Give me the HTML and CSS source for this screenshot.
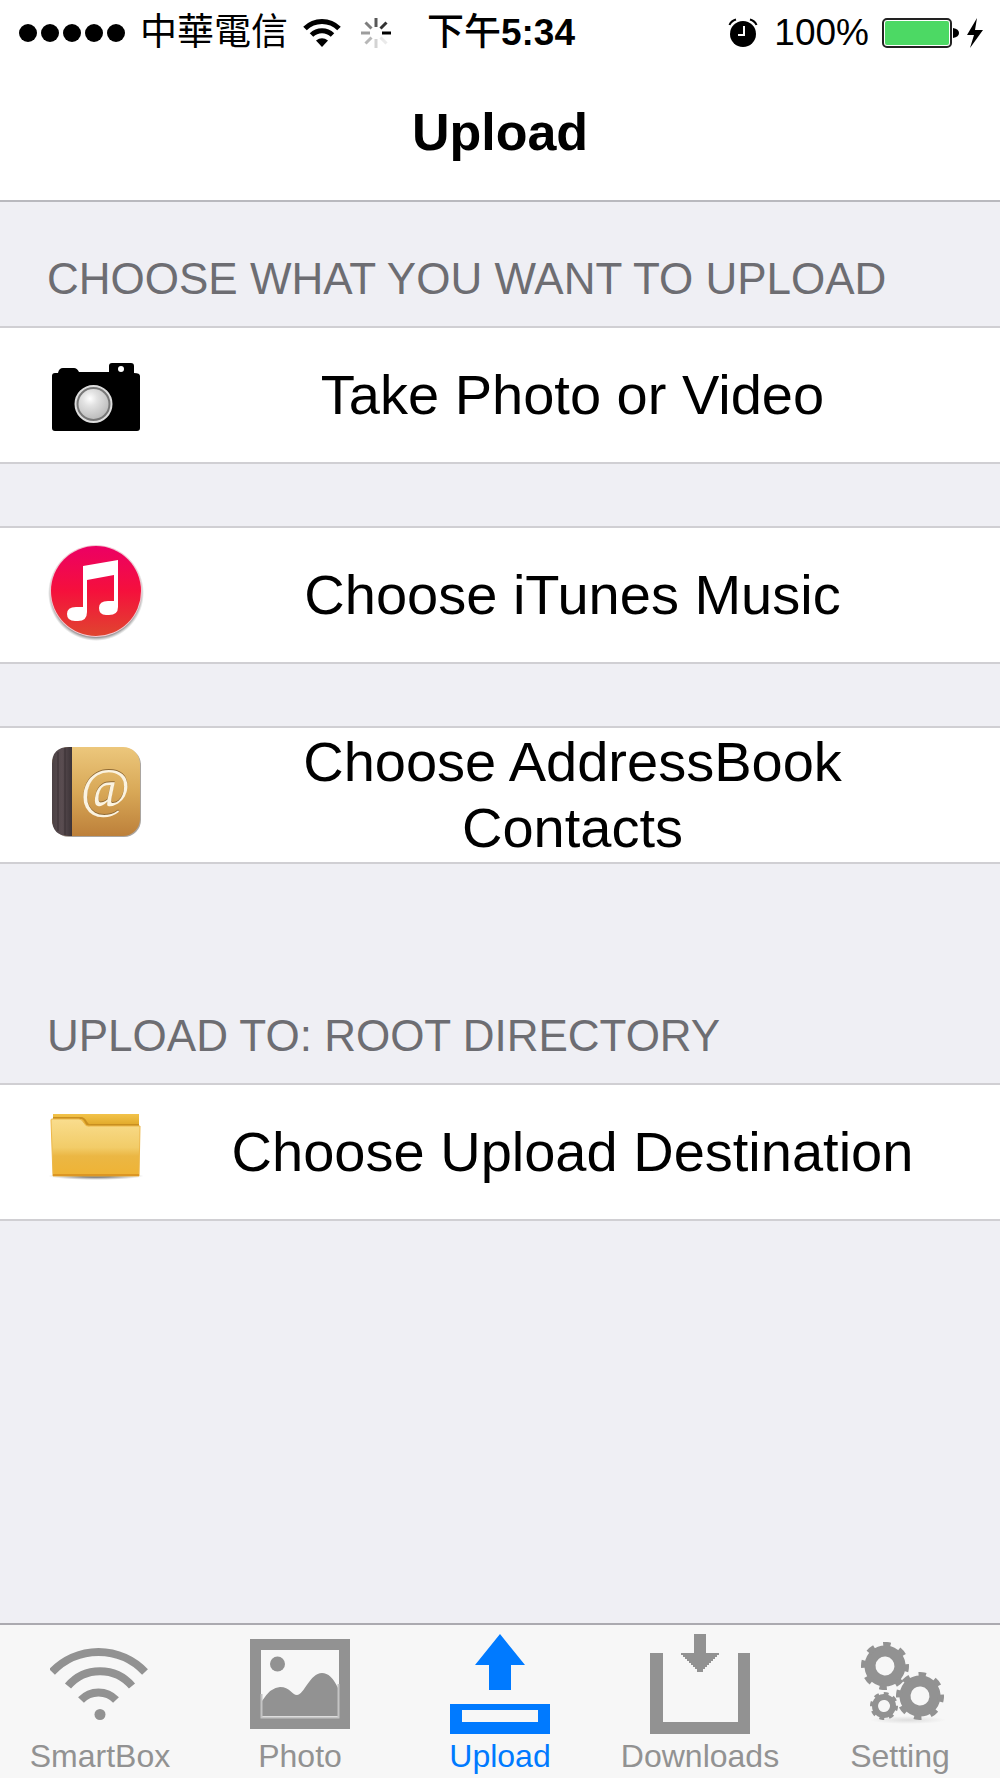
FILE: index.html
```html
<!DOCTYPE html>
<html lang="en">
<head>
<meta charset="utf-8">
<meta name="viewport" content="width=device-width, initial-scale=1">
<title>Upload</title>
<link rel="stylesheet" href="styles.css">
</head>
<body>
<div class="screen">
  <header class="top">
    <div class="status">
      <div class="status-left">
        <svg width="106" height="18" viewBox="0 0 106 18" aria-hidden="true">
          <circle cx="9" cy="9" r="9"/><circle cx="31" cy="9" r="9"/><circle cx="53" cy="9" r="9"/><circle cx="75" cy="9" r="9"/><circle cx="97" cy="9" r="9"/>
        </svg>
        <span class="carrier">中華電信</span>
        <svg width="38" height="30" viewBox="0 0 38 30" fill="none" stroke="#000" stroke-width="5" aria-hidden="true">
          <path d="M2 10.500A24 24 0 0 1 36 10.500"/>
          <path d="M8.500 17A15 15 0 0 1 29.500 17"/>
          <path d="M13 22.500Q19 18 25 22.500L19 29Z" fill="#000" stroke="none"/>
        </svg>
        <svg class="spinner" width="32" height="32" viewBox="-16 -16 32 32" stroke="#000" stroke-width="3" aria-hidden="true">
          <path d="M0-6V-15" opacity=".65"/>
          <path d="M4.500-4.500L10.500-10.500" opacity=".8"/>
          <path d="M6 0H15"/>
          <path d="M4.500 4.500L10.500 10.500" opacity=".08"/>
          <path d="M0 6V15" opacity=".17"/>
          <path d="M-4.500 4.500L-10.500 10.500" opacity=".28"/>
          <path d="M-6 0H-15" opacity=".38"/>
          <path d="M-4.500-4.500L-10.500-10.500" opacity=".5"/>
        </svg>
      </div>
      <time class="time"><span class="meridiem">下午</span>5:34</time>
      <div class="status-right">
        <svg width="30" height="30" viewBox="0 0 30 30" aria-hidden="true">
          <circle cx="15" cy="16" r="13"/>
          <path d="M1.500 7Q3 3 8 1.500M28.500 7Q27 3 22 1.500" fill="none" stroke="#000" stroke-width="2"/>
          <path d="M16 8V17H10" fill="none" stroke="#fff" stroke-width="2"/>
        </svg>
        <span class="percent">100%</span>
        <svg width="102" height="32" viewBox="0 0 102 32" aria-hidden="true">
          <rect x="2" y="2" width="68" height="28" rx="4" fill="#fff" stroke="#222" stroke-width="2"/>
          <rect x="4" y="4" width="64" height="24" rx="2" fill="#4cd964"/>
          <path d="M72 11Q78 12 78 16T72 21Z"/>
          <path d="M96 1L86 18H93L89 31L102 13H94Z"/>
        </svg>
      </div>
    </div>
    <h1 class="title">Upload</h1>
  </header>

  <main class="content">
    <section>
      <h2 class="caption">CHOOSE WHAT YOU WANT TO UPLOAD</h2>
      <div class="rows">
        <button class="row" type="button">
          <svg class="row-icon" viewBox="0 0 96 104" aria-hidden="true">
            <defs>
              <radialGradient id="lens" cx=".38" cy=".32" r=".7"><stop offset="0" stop-color="#fff"/><stop offset=".35" stop-color="#e2e2e2"/><stop offset="1" stop-color="#bcbcbc"/></radialGradient>
            </defs>
            <path d="M7 30Q4 30 4 33V85Q4 88 7 88H89Q92 88 92 85V33Q92 30 86 30V23Q86 20 83 20H64Q61 20 61 23V29H31Q29 25 26 25H15Q11 25 10 30Z"/>
            <circle cx="73" cy="26" r="3" fill="#fff"/>
            <circle cx="45.500" cy="61" r="18" fill="#777" stroke="#ddd" stroke-width="2"/>
            <circle cx="45.500" cy="61" r="15" fill="url(#lens)"/>
          </svg>
          <span class="row-label">Take Photo or Video</span>
        </button>
        <button class="row" type="button">
          <svg class="row-icon" viewBox="0 0 96 104" aria-hidden="true">
            <defs>
              <linearGradient id="disc" x2="0" y2="1"><stop offset="0" stop-color="#ec0064"/><stop offset=".5" stop-color="#f5103c"/><stop offset="1" stop-color="#e0452f"/></linearGradient>
              <radialGradient id="halo"><stop offset=".9" stop-color="#666"/><stop offset="1" stop-color="#999" stop-opacity="0"/></radialGradient>
            </defs>
            <circle cx="48" cy="50" r="48" fill="url(#halo)"/>
            <circle cx="48" cy="48" r="46" fill="#f2c9d2"/>
            <circle cx="48" cy="48" r="45" fill="url(#disc)"/>
            <path d="M35 23L70 17V64Q70 72 61 72H58Q51 72 51 65T60 58H66V32L39 37V69Q39 78 30 78H27Q19 78 19 71T28 64H35Z" fill="#fff"/>
          </svg>
          <span class="row-label">Choose iTunes Music</span>
        </button>
        <button class="row" type="button">
          <svg class="row-icon" viewBox="0 0 96 104" aria-hidden="true">
            <defs>
              <linearGradient id="cover" x2="0" y2="1"><stop offset="0" stop-color="#ecc77c"/><stop offset=".5" stop-color="#d8a857"/><stop offset="1" stop-color="#bd803a"/></linearGradient>
              <linearGradient id="spine"><stop offset="0" stop-color="#4b4144"/><stop offset=".5" stop-color="#5a4d51"/><stop offset="1" stop-color="#3c3337"/></linearGradient>
            </defs>
            <rect x="4" y="5" width="89" height="89" rx="17" fill="#aaa5a0"/>
            <rect x="4" y="4" width="88" height="89" rx="17" fill="url(#cover)"/>
            <path d="M24 4H21Q4 4 4 21V76Q4 93 21 93H24Z" fill="url(#spine)"/>
            <path d="M10 9V88M17 5V92" stroke="#382f33" fill="none"/>
            <text class="at-shade" x="57" y="62">@</text>
            <text class="at" x="57" y="63">@</text>
          </svg>
          <span class="row-label">Choose AddressBook Contacts</span>
        </button>
      </div>
    </section>

    <section>
      <h2 class="caption caption-second">UPLOAD TO: ROOT DIRECTORY</h2>
      <div class="rows">
        <button class="row" type="button">
          <svg class="row-icon" viewBox="0 0 96 104" aria-hidden="true">
            <defs>
              <linearGradient id="flap" x2="0" y2="1"><stop offset="0" stop-color="#f9dd8e"/><stop offset=".5" stop-color="#f2cc68"/><stop offset=".65" stop-color="#ebb744"/><stop offset="1" stop-color="#efb334"/></linearGradient>
              <linearGradient id="back" x2="0" y2="1"><stop offset="0" stop-color="#f2c34a"/><stop offset="1" stop-color="#d89a18"/></linearGradient>
              <radialGradient id="ground"><stop offset=".3" stop-color="#777"/><stop offset="1" stop-color="#999" stop-opacity="0"/></radialGradient>
            </defs>
            <ellipse cx="48" cy="76" rx="48" ry="4" fill="url(#ground)"/>
            <path d="M5 14H91V31H5Z" fill="url(#back)"/>
            <path d="M5 18H33Q36 18 38 22T43 25H91" fill="none" stroke="#c98f20" stroke-width="2"/>
            <path d="M3 20Q3 19 4 19H31Q34 19 36 23T42 26H92L91 76H5Z" fill="url(#flap)" stroke="#edb84a"/>
            <path d="M5 75H91" stroke="#dc9624" stroke-width="2"/>
          </svg>
          <span class="row-label">Choose Upload Destination</span>
        </button>
      </div>
    </section>
  </main>

  <nav class="tabs">
    <a class="tab" href="#smartbox">
      <svg class="tab-icon" viewBox="0 0 100 100" aria-hidden="true">
        <g fill="none" stroke="currentColor" stroke-width="8">
          <path d="M2 38A64 64 0 0 1 95 38"/><path d="M18 52A42 42 0 0 1 82 52"/><path d="M31 66A24 24 0 0 1 66 66"/>
        </g>
        <circle cx="50" cy="80.500" r="5.500" fill="currentColor"/>
      </svg>
      <span>SmartBox</span>
    </a>
    <a class="tab" href="#photo">
      <svg class="tab-icon" viewBox="0 0 100 100" fill="currentColor" aria-hidden="true">
        <path fill-rule="evenodd" d="M0 5H100V95H0ZM11 16V84H89V16Z"/>
        <path d="M12 67Q21 53 30 53C40 53 42 61 47 61C54 61 60 39 72 39Q81 39 88 54V82H12Z"/>
        <path d="M11.500 60V83.500H88.500V50" fill="none" stroke="#c4c4c4" stroke-width="2"/>
        <circle cx="27.500" cy="30" r="7.500"/>
      </svg>
      <span>Photo</span>
    </a>
    <a class="tab tab-active" href="#upload" aria-current="page">
      <svg class="tab-icon" viewBox="0 0 100 100" fill="currentColor" aria-hidden="true">
        <path d="M50 0L75 31H61V56H39V31H25Z"/>
        <path fill-rule="evenodd" d="M0 70H100V100H0ZM12 76V88H88V76Z"/>
      </svg>
      <span>Upload</span>
    </a>
    <a class="tab" href="#downloads">
      <svg class="tab-icon" viewBox="0 0 100 100" fill="currentColor" aria-hidden="true">
        <path d="M0 19H13V88H88V19H100V100H0Z"/>
        <path d="M44 0H56V19H69V21H67V23H65V25H63V27H61V29H59V31H57V33H55V35H53V38H47V35H45V33H43V31H41V29H39V27H37V25H35V23H33V21H31V19H44Z"/>
      </svg>
      <span>Downloads</span>
    </a>
    <a class="tab" href="#setting">
      <svg class="tab-icon" viewBox="0 0 100 100" aria-hidden="true">
        <defs><radialGradient id="cast"><stop offset="0" stop-color="#ddd"/><stop offset="1" stop-color="#f7f7f7"/></radialGradient></defs>
        <ellipse cx="58" cy="86" rx="38" ry="4" fill="url(#cast)"/>
        <g fill="none" stroke="currentColor">
          <g transform="translate(35 32) rotate(5)"><circle r="15" stroke-width="11"/><circle r="21" stroke-width="6" pathLength="160" stroke-dasharray="9 11" stroke-dashoffset="4.500"/></g>
          <g transform="translate(70 62) rotate(6)"><circle r="15" stroke-width="11"/><circle r="21" stroke-width="6" pathLength="160" stroke-dasharray="9 11" stroke-dashoffset="4.500"/></g>
          <g transform="translate(34 72) rotate(10)"><circle r="9" stroke-width="6"/><circle r="12" stroke-width="4" pathLength="160" stroke-dasharray="10 10" stroke-dashoffset="5"/></g>
        </g>
      </svg>
      <span>Setting</span>
    </a>
  </nav>
</div>
</body>
</html>
```
FILE: styles.css
```css
* {
  box-sizing: border-box;
}

body {
  margin: 0;
  background: #efeff4;
  color: #000;
  font-family: "Liberation Sans", "Noto Sans CJK TC", sans-serif;
}

.screen {
  display: flex;
  flex-direction: column;
  min-height: 100vh;
}

svg {
  display: block;
  flex: none;
}

.top {
  background: #fff;
  border-bottom: 2px solid #b9b9be;
}

.status {
  display: flex;
  align-items: center;
  height: 64px;
  padding: 1px 17px 0 19px;
  font-size: 37px;
  line-height: 48px;
  white-space: nowrap;
}

.status-left,
.status-right {
  display: flex;
  flex: 1;
  align-items: center;
}

.status-left {
  gap: 15px;
}

.spinner {
  margin-left: 4px;
}

.status-right {
  justify-content: flex-end;
  gap: 16px;
}

.percent {
  margin-right: -4px;
}

.time {
  font-weight: bold;
}

.meridiem {
  font-weight: 500;
}

.title {
  margin: 0;
  padding: 36px 0;
  font-size: 52px;
  line-height: 64px;
  text-align: center;
}

.content {
  flex: 1;
}

.caption {
  margin: 0;
  padding: 51px 47px 21px;
  color: #6d6d72;
  font-size: 44px;
  font-weight: normal;
  line-height: 52px;
}

.caption-second {
  padding-top: 146px;
}

.rows {
  display: grid;
  gap: 62px;
}

.row {
  display: flex;
  align-items: center;
  gap: 48px;
  width: 100%;
  min-height: 138px;
  margin: 0;
  padding: 0 47px 0 48px;
  border: solid #d0cfd3;
  border-width: 2px 0;
  background: #fff;
  color: inherit;
  font: inherit;
  font-size: 56px;
  line-height: 66px;
}

.row-icon {
  width: 96px;
  height: 104px;
}

.row-label {
  flex: 1;
  text-align: center;
}

.at,
.at-shade {
  font-family: "Liberation Serif", serif;
  font-size: 54px;
  font-style: italic;
  text-anchor: middle;
}

.at {
  fill: #fbf3e0;
}

.at-shade {
  fill: #8f6a35;
}

.tabs {
  display: grid;
  grid-template-columns: repeat(5, 1fr);
  border-top: 2px solid #abaab0;
  background: #f7f7f7;
}

.tab {
  display: flex;
  flex-direction: column;
  align-items: center;
  gap: 4px;
  padding: 9px 0 4px;
  color: #929292;
  font-size: 32px;
  line-height: 36px;
  text-decoration: none;
}

.tab-icon {
  width: 100px;
  height: 100px;
}

.tab-active {
  color: #007aff;
}
```
